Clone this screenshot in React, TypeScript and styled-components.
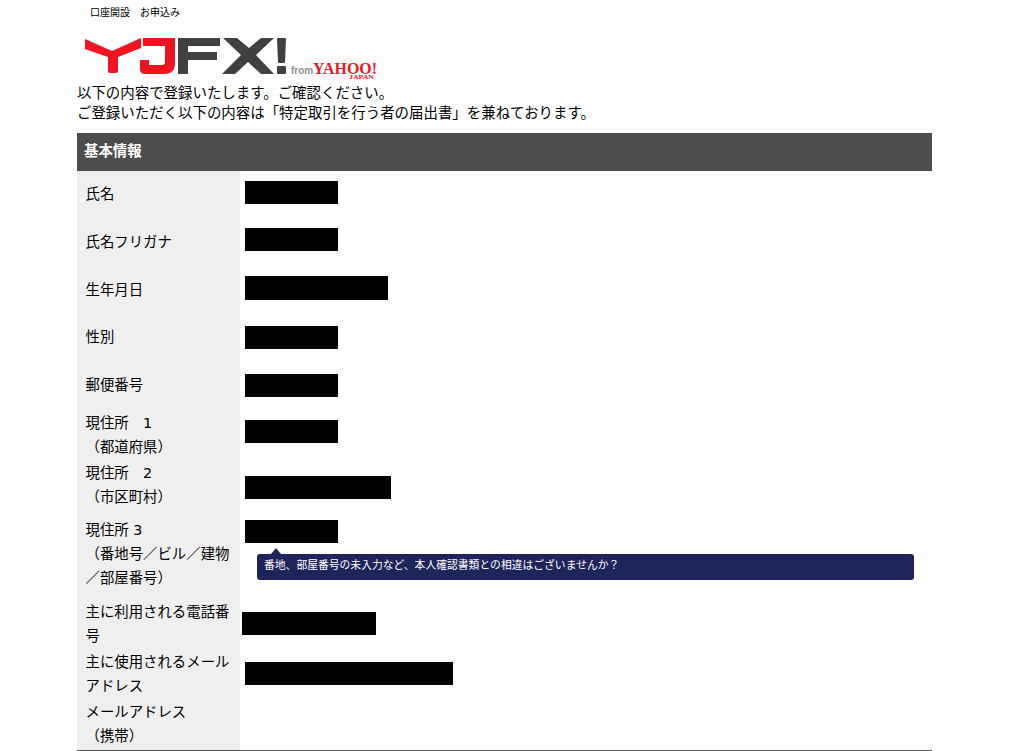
import React from 'react';
import styled, { createGlobalStyle } from 'styled-components';

const GlobalStyle = createGlobalStyle`
  html, body {
    margin: 0;
    padding: 0;
    background: #fff;
    color: #000;
    font-family: "DejaVu Sans", "Noto Sans CJK JP", sans-serif;
    font-size: 14.45px;
  }
`;

const Page = styled.div`
  width: 855px;
  height: 751px;
  margin-left: 77px;
  overflow: hidden;
`;

const TopLabel = styled.div`
  height: 25px;
  padding: 6px 0 0 13px;
  box-sizing: border-box;
  font-size: 10px;
  line-height: 14px;
`;

const LogoWrap = styled.div`
  height: 58px;
  padding: 12px 0 0 8px;
  box-sizing: border-box;
`;

const Intro = styled.p`
  margin: 0 0 10px;
  line-height: 20px;
`;

const SectionHead = styled.h2`
  margin: 0;
  height: 38px;
  padding-left: 7px;
  background: #4d4d4d;
  color: #fff;
  font-size: 14.4px;
  font-weight: 700;
  line-height: 37px;
`;

const Table = styled.div`
  box-sizing: border-box;
  border-bottom: 1px solid #555;
  height: 580px;
  overflow: hidden;
`;

const Row = styled.div<{ $h: number }>`
  display: grid;
  grid-template-columns: 163px 1fr;
  height: ${p => p.$h}px;
`;

const Label = styled.div<{ $top: number }>`
  background: #efefef;
  padding: ${p => p.$top}px 8px 0 8.5px;
  font-size: 14.4px;
  line-height: 24px;
  white-space: nowrap;
`;

const Value = styled.div<{ $top: number; $left?: number }>`
  padding: ${p => p.$top}px 0 0 ${p => p.$left ?? 5}px;
`;

const Redacted = styled.div<{ $w: number; $h?: number }>`
  width: ${p => p.$w}px;
  height: ${p => p.$h ?? 23}px;
  background: #000;
`;

const Hint = styled.div`
  position: relative;
  width: 657px;
  height: 26px;
  margin: 11px 0 0 12px;
  padding-left: 7px;
  box-sizing: border-box;
  background: #20245c;
  border-radius: 3px;
  color: #fff;
  font-size: 10.8px;
  line-height: 24px;
  white-space: nowrap;
  &::before {
    content: '';
    position: absolute;
    left: 14px;
    top: -6px;
    border-left: 5px solid transparent;
    border-right: 5px solid transparent;
    border-bottom: 6px solid #20245c;
  }
`;

const Logo = () => (
  <svg width="294" height="44" viewBox="0 0 294 44" aria-label="YJFX! from Yahoo! Japan">
    <g fill="#f0141e">
      <path d="M0 2L27 14 56 1V11L33 20V34Q33 36 31 36H25Q23 36 23 34V20L0 12z" />
      <path d="M58 1H90V26Q90 37 79 37H60Q55 37 55 32V23H64V28H77Q80 28 80 25V9H58z" />
    </g>
    <g fill="#414141">
      <path d="M93 1H135V9H103V15H132V23H103V37H93z" />
      <path d="M138 1H152L164 11 176 1H189L171 18 189 37H176L163 25 150 37H137L156 18z" />
      <path d="M193 1H200Q201 1 201 2L200 25Q200 26 199 26H194Q193 26 193 25L192 2Q192 1 193 1zM193 29H200Q201 29 201 30V36Q201 37 200 37H193Q192 37 192 36V30Q192 29 193 29z" />
    </g>
    <text x="206" y="37" fontFamily="Liberation Sans, sans-serif" fontSize="10" fontWeight="700" fill="#909090">from</text>
    <text x="228" y="37" fontFamily="Liberation Serif, serif" fontSize="16" fontWeight="700" fill="#f0141e" textLength="64" lengthAdjust="spacingAndGlyphs">YAHOO!</text>
    <text x="264" y="42" fontFamily="Liberation Serif, serif" fontSize="6" fontWeight="700" fill="#f0141e" textLength="25" lengthAdjust="spacingAndGlyphs">JAPAN</text>
  </svg>
);

type RowData = {
  h: number;
  top: number;
  label: string[];
  valueTop: number;
  w?: number;
  left?: number;
  h2?: number;
  hint?: string;
};

const rows: RowData[] = [
  { h: 47, top: 11, label: ['氏名'], valueTop: 10, w: 93 },
  { h: 48, top: 12, label: ['氏名フリガナ'], valueTop: 10, w: 93 },
  { h: 48, top: 12, label: ['生年月日'], valueTop: 10, w: 143, h2: 24 },
  { h: 48, top: 11, label: ['性別'], valueTop: 12, w: 93 },
  { h: 48, top: 11, label: ['郵便番号'], valueTop: 12, w: 93 },
  { h: 50, top: 1, label: ['現住所　1', '（都道府県）'], valueTop: 10, w: 93 },
  { h: 50, top: 1, label: ['現住所　2', '（市区町村）'], valueTop: 16, w: 146 },
  {
    h: 90,
    top: 8,
    label: ['現住所 3', '（番地号／ビル／建物', '／部屋番号）'],
    valueTop: 10,
    w: 93,
    hint: '番地、部屋番号の未入力など、本人確認書類との相違はございませんか？',
  },
  { h: 50, top: 0, label: ['主に利用される電話番', '号'], valueTop: 12, w: 134, left: 2 },
  { h: 50, top: 0, label: ['主に使用されるメール', 'アドレス'], valueTop: 12, w: 208 },
  { h: 50, top: 0, label: ['メールアドレス', '（携帯）'], valueTop: 0 },
];

export default function App() {
  return (
    <Page>
      <GlobalStyle />
      <TopLabel>口座開設　お申込み</TopLabel>
      <LogoWrap>
        <Logo />
      </LogoWrap>
      <Intro>
        以下の内容で登録いたします。ご確認ください。
        <br />
        ご登録いただく以下の内容は「特定取引を行う者の届出書」を兼ねております。
      </Intro>
      <SectionHead>基本情報</SectionHead>
      <Table>
        {rows.map(r => (
          <Row key={r.label[0] + r.label.length} $h={r.h}>
            <Label $top={r.top}>
              {r.label.map(l => (
                <div key={l}>{l}</div>
              ))}
            </Label>
            <Value $top={r.valueTop} $left={r.left}>
              {r.w && <Redacted $w={r.w} $h={r.h2} />}
              {r.hint && <Hint>{r.hint}</Hint>}
            </Value>
          </Row>
        ))}
      </Table>
    </Page>
  );
}
